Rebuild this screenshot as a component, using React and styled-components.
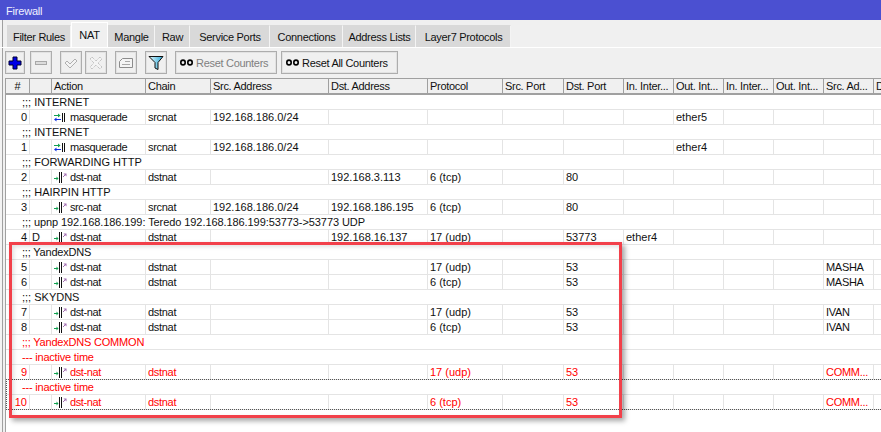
import React from 'react';
import styled, { createGlobalStyle } from 'styled-components';

const COLUMNS = '24px 22px 94px 65px 118px 99px 75px 61px 60px 50px 50px 50px 50px 50px 7px';

const HEADERS = ['#', '', 'Action', 'Chain', 'Src. Address', 'Dst. Address', 'Protocol', 'Src. Port', 'Dst. Port',
  'In. Inter...', 'Out. Int...', 'In. Inter...', 'Out. Int...', 'Src. Ad...', 'D'];

const TABS = [
  { label: 'Filter Rules', width: 64 },
  { label: 'NAT', width: 37, active: true },
  { label: 'Mangle', width: 47 },
  { label: 'Raw', width: 35 },
  { label: 'Service Ports', width: 80 },
  { label: 'Connections', width: 73 },
  { label: 'Address Lists', width: 73 },
  { label: 'Layer7 Protocols', width: 95 },
];

const rule = (num, flag, action, chain, src, dst, proto, dport, inIf, outIf, srcList) => ({
  num, flag, action, chain, src, dst, proto, dport, inIf, outIf, srcList,
});

function RedirectIcon() {
  return (
    <svg width="14" height="15" viewBox="0 0 14 15">
      <path d="M1 8.5h3" stroke="#12a150" strokeWidth="1" />
      <path d="M3.5 6.5v4l2-2z" fill="#12a150" />
      <path d="M6.5 2v11M8.5 2v11" stroke="#111" strokeWidth="1" />
      <path d="M10 7l3-3" stroke="#a06cb0" strokeWidth="1" />
      <path d="M10.5 3.5h3v3z" fill="#a06cb0" />
    </svg>
  );
}

function MasqueradeIcon() {
  return (
    <svg width="14" height="15" viewBox="0 0 14 15">
      <path d="M1 5.5h5" stroke="#12a150" strokeWidth="1" />
      <path d="M5 3.5v4l2.5-2z" fill="#12a150" />
      <path d="M3 9.5h5" stroke="#1030e0" strokeWidth="1" />
      <path d="M3.5 7.5v4L1 9.5z" fill="#1030e0" />
      <path d="M9.5 3v9M11.5 3v9" stroke="#111" strokeWidth="1" />
    </svg>
  );
}

function PlusIcon() {
  return (
    <svg width="14" height="14" viewBox="0 0 14 14">
      <path d="M5 1h4v4h4v4H9v4H5V9H1V5h4z" fill="#0000e6" stroke="#000030" strokeWidth="1" />
    </svg>
  );
}

function MinusIcon() {
  return (
    <svg width="14" height="14" viewBox="0 0 14 14">
      <rect x="1.5" y="5.5" width="11" height="3" fill="#dcdcdc" stroke="#a8a8a8" />
    </svg>
  );
}

function CheckIcon() {
  return (
    <svg width="14" height="14" viewBox="0 0 14 14">
      <path d="M1 7l2-2 3 3 5-5 2 2-7 7z" fill="#f4f4f4" stroke="#b0b0b0" strokeWidth="1" />
    </svg>
  );
}

function CrossIcon() {
  return (
    <svg width="14" height="14" viewBox="0 0 14 14">
      <path d="M3 1l4 4 4-4 2 2-4 4 4 4-2 2-4-4-4 4-2-2 4-4-4-4z" fill="#f4f4f4" stroke="#b0b0b0" strokeWidth="1" strokeDasharray="1 1" />
    </svg>
  );
}

function NoteIcon() {
  return (
    <svg width="16" height="14" viewBox="0 0 16 14">
      <path d="M4.5 2.5h10v9h-13v-6z" fill="#f4f4f4" stroke="#8c8c8c" />
      <path d="M7 5.5h5M4 8.5h8" stroke="#a8a8a8" />
    </svg>
  );
}

function FilterIcon() {
  return (
    <svg width="16" height="16" viewBox="0 0 16 16">
      <defs>
        <linearGradient id="funnel" x1="0" y1="0" x2="1" y2="0">
          <stop offset="0" stopColor="#e8fbff" />
          <stop offset="1" stopColor="#2aa8d8" />
        </linearGradient>
      </defs>
      <path d="M1 1.5h14l-5 6v7l-3 -1.5v-5.5z" fill="url(#funnel)" stroke="#111" strokeWidth="1" />
    </svg>
  );
}

function CounterIcon() {
  return (
    <svg width="13" height="7" viewBox="0 0 13 7">
      <ellipse cx="3" cy="3.5" rx="2.2" ry="2.4" fill="none" stroke="#000" strokeWidth="1.6" />
      <ellipse cx="10" cy="3.5" rx="2.2" ry="2.4" fill="none" stroke="#000" strokeWidth="1.6" />
    </svg>
  );
}

function RuleRow({ rule, red }) {
  return (
    <Row $red={red}>
      <NumCell>{rule.num}</NumCell>
      <Cell>{rule.flag}</Cell>
      <ActionCell>
        {rule.action === 'masquerade' ? <MasqueradeIcon /> : <RedirectIcon />}
        {rule.action}
      </ActionCell>
      <Cell $spacing={-0.3}>{rule.chain}</Cell>
      <Cell>{rule.src}</Cell>
      <Cell>{rule.dst}</Cell>
      <Cell>{rule.proto}</Cell>
      <Cell />
      <Cell>{rule.dport}</Cell>
      <Cell>{rule.inIf}</Cell>
      <Cell>{rule.outIf}</Cell>
      <Cell />
      <Cell />
      <Cell $spacing={-0.3}>{rule.srcList}</Cell>
      <Cell />
    </Row>
  );
}

function App() {
  return (
    <Window>
      <GlobalStyle />
      <TitleBar>Firewall</TitleBar>
      <Content>
        <TabStrip>
          {TABS.map((tab) => (
            <Tab key={tab.label} $width={tab.width} $active={tab.active}>{tab.label}</Tab>
          ))}
        </TabStrip>
        <Toolbar>
          <ToolButton $width={20}><PlusIcon /></ToolButton>
          <ToolButton $gap={5}><MinusIcon /></ToolButton>
          <ToolButton $gap={8}><CheckIcon /></ToolButton>
          <ToolButton $gap={3}><CrossIcon /></ToolButton>
          <ToolButton $gap={8}><NoteIcon /></ToolButton>
          <ToolButton $gap={8}><FilterIcon /></ToolButton>
          <TextButton $width={102} $gap={8} $disabled><CounterIcon /><span>Reset Counters</span></TextButton>
          <TextButton $width={117} $gap={4}><CounterIcon /><span>Reset All Counters</span></TextButton>
        </Toolbar>
        <Table>
          <HeaderRow>
            {HEADERS.map((title, i) => (
              <HeaderCell key={i} $center={title === '#'}>{title}</HeaderCell>
            ))}
          </HeaderRow>
          <CommentRow>;;; INTERNET</CommentRow>
          <RuleRow rule={rule('0', '', 'masquerade', 'srcnat', '192.168.186.0/24', '', '', '', '', 'ether5', '')} />
          <CommentRow>;;; INTERNET</CommentRow>
          <RuleRow rule={rule('1', '', 'masquerade', 'srcnat', '192.168.186.0/24', '', '', '', '', 'ether4', '')} />
          <CommentRow>;;; FORWARDING HTTP</CommentRow>
          <RuleRow rule={rule('2', '', 'dst-nat', 'dstnat', '', '192.168.3.113', '6 (tcp)', '80', '', '', '')} />
          <CommentRow>;;; HAIRPIN HTTP</CommentRow>
          <RuleRow rule={rule('3', '', 'src-nat', 'srcnat', '192.168.186.0/24', '192.168.186.195', '6 (tcp)', '80', '', '', '')} />
          <CommentRow $spacing={-0.08}>;;; upnp 192.168.186.199: Teredo 192.168.186.199:53773-&gt;53773 UDP</CommentRow>
          <RuleRow rule={rule('4', 'D', 'dst-nat', 'dstnat', '', '192.168.16.137', '17 (udp)', '53773', 'ether4', '', '')} />
          <CommentRow $spacing={-0.2}>;;; YandexDNS</CommentRow>
          <RuleRow rule={rule('5', '', 'dst-nat', 'dstnat', '', '', '17 (udp)', '53', '', '', 'MASHA')} />
          <RuleRow rule={rule('6', '', 'dst-nat', 'dstnat', '', '', '6 (tcp)', '53', '', '', 'MASHA')} />
          <CommentRow>;;; SKYDNS</CommentRow>
          <RuleRow rule={rule('7', '', 'dst-nat', 'dstnat', '', '', '17 (udp)', '53', '', '', 'IVAN')} />
          <RuleRow rule={rule('8', '', 'dst-nat', 'dstnat', '', '', '6 (tcp)', '53', '', '', 'IVAN')} />
          <CommentRow $red $spacing={-0.2}>;;; YandexDNS COMMON</CommentRow>
          <CommentRow $red $spacing={-0.2}>--- inactive time</CommentRow>
          <RuleRow red rule={rule('9', '', 'dst-nat', 'dstnat', '', '', '17 (udp)', '53', '', '', 'COMM...')} />
          <SelectedGroup>
            <CommentRow $red $spacing={-0.2}>--- inactive time</CommentRow>
            <RuleRow red rule={rule('10', '', 'dst-nat', 'dstnat', '', '', '6 (tcp)', '53', '', '', 'COMM...')} />
          </SelectedGroup>
        </Table>
      </Content>
      <Highlight />
    </Window>
  );
}

const GlobalStyle = createGlobalStyle`
  html, body {
    margin: 0;
    padding: 0;
    background: #fff;
  }
  * {
    box-sizing: border-box;
  }
`;

const Window = styled.div`
  position: relative;
  width: 881px;
  height: 432px;
  overflow: hidden;
  display: flex;
  flex-direction: column;
  background: #f3f3f3;
  font-family: "Liberation Sans", Arial, sans-serif;
  font-size: 11px;
  color: #111;
`;

const TitleBar = styled.div`
  height: 20px;
  flex: none;
  padding-left: 6px;
  background: #4b50d1;
  color: #f0f0ff;
  font-size: 11px;
  letter-spacing: -0.2px;
  line-height: 22px;
`;

const Content = styled.div`
  flex: 1;
  min-height: 0;
  display: flex;
  flex-direction: column;
  margin-left: 2px;
  padding-left: 2px;
  border-left: 1px solid #a0a0a0;
  background: #f0f0f0;
`;

const TabStrip = styled.div`
  height: 28px;
  flex: none;
  display: flex;
  align-items: flex-end;
  margin-left: -5px;
  padding: 0 0 1px 7px;
  border-bottom: 1px solid #fff;
  letter-spacing: -0.3px;
`;

const Tab = styled.div`
  width: ${(p) => p.$width}px;
  height: ${(p) => (p.$active ? 25 : 22)}px;
  flex: none;
  text-align: center;
  line-height: ${(p) => (p.$active ? 25 : 23)}px;
  background: ${(p) => (p.$active ? '#f0f0f0' : '#d9d9d9')};
  border-right: 1px solid ${(p) => (p.$active ? '#fff' : '#f4f4f4')};
  border-top: 1px solid ${(p) => (p.$active ? '#fff' : 'transparent')};
  border-left: 1px solid ${(p) => (p.$active ? '#fff' : 'transparent')};
  margin-bottom: -1px;
`;

const Toolbar = styled.div`
  flex: none;
  height: 30px;
  display: flex;
  padding-top: 3px;
  align-items: flex-start;
`;

const ToolButton = styled.div`
  width: ${(p) => p.$width || 22}px;
  height: 23px;
  margin-left: ${(p) => p.$gap || 0}px;
  display: flex;
  align-items: center;
  justify-content: center;
  background: #f0f0f0;
  border: 1px solid #adadad;
  box-shadow: inset 0 0 0 1px #e2e2e2;
`;

const TextButton = styled(ToolButton)`
  gap: 3px;
  justify-content: flex-start;
  padding-left: 4px;
  letter-spacing: -0.3px;
  color: ${(p) => (p.$disabled ? '#7f7f7f' : '#111')};
`;

const Table = styled.div`
  flex: 1;
  min-height: 0;
  background: #fff;
  border-left: 1px solid #a0a0a0;
`;

const HeaderRow = styled.div`
  height: 17px;
  display: grid;
  grid-template-columns: ${COLUMNS};
  background: #f0f0f0;
  border-top: 1px solid #a0a0a0;
  border-bottom: 2px solid #a0a0a0;
`;

const HeaderCell = styled.div`
  padding-left: ${(p) => (p.$center ? 0 : 2)}px;
  line-height: 14px;
  overflow: hidden;
  white-space: nowrap;
  letter-spacing: -0.3px;
  text-align: ${(p) => (p.$center ? 'center' : 'left')};
  border-right: 1px solid #a0a0a0;
  &:last-child {
    border-right: none;
  }
`;

const Row = styled.div`
  height: 15px;
  display: grid;
  grid-template-columns: ${COLUMNS};
  border-bottom: 1px solid #e4e4e4;
  color: ${(p) => (p.$red ? '#ff0000' : '#111')};
`;

const Cell = styled.div`
  padding-left: 2px;
  line-height: 14px;
  white-space: nowrap;
  overflow: hidden;
  letter-spacing: ${(p) => p.$spacing || 0}px;
  border-right: 1px solid #e4e4e4;
  &:last-child {
    border-right: none;
  }
`;

const NumCell = styled(Cell)`
  padding: 0 2px 0 0;
  text-align: right;
`;

const ActionCell = styled(Cell)`
  display: flex;
  align-items: center;
  gap: 3px;
  padding-left: 1px;
  letter-spacing: -0.4px;
`;

const CommentRow = styled.div`
  height: 15px;
  padding-left: 16px;
  line-height: 14px;
  white-space: nowrap;
  letter-spacing: ${(p) => p.$spacing || 0}px;
  border-bottom: 1px solid #e4e4e4;
  color: ${(p) => (p.$red ? '#ff0000' : '#111')};
`;

const SelectedGroup = styled.div`
  position: relative;
  &::after {
    content: '';
    position: absolute;
    top: -1px;
    left: 0;
    right: 0;
    bottom: 0;
    border: 1px dotted #555;
    border-right: none;
    pointer-events: none;
  }
`;

const Highlight = styled.div`
  position: absolute;
  left: 9px;
  top: 242px;
  width: 613px;
  height: 176px;
  border: 3px solid #f2404a;
  box-shadow: 3px 3px 5px rgba(0, 0, 0, 0.35), inset 2px 2px 4px rgba(0, 0, 0, 0.12);
  pointer-events: none;
`;

export default App;
